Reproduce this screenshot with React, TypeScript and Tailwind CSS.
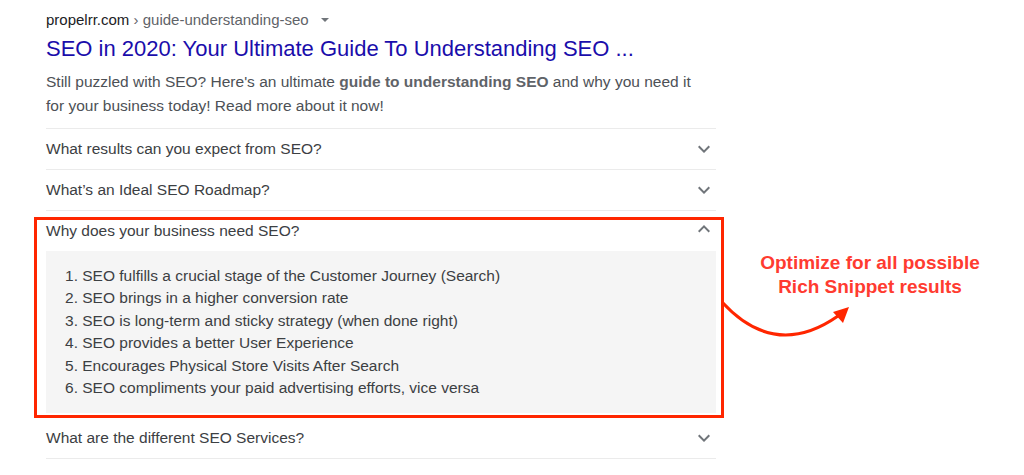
import React from "react";

const faqs = [
    "What results can you expect from SEO?",
    "What’s an Ideal SEO Roadmap?",
];

const reasons = [
    "SEO fulfills a crucial stage of the Customer Journey (Search)",
    "SEO brings in a higher conversion rate",
    "SEO is long-term and sticky strategy (when done right)",
    "SEO provides a better User Experience",
    "Encourages Physical Store Visits After Search",
    "SEO compliments your paid advertising efforts, vice versa",
];

function ChevronDown() {
    return (
        <svg viewBox="0 0 24 24" className="h-6 w-6 shrink-0 fill-[#70757a]">
            <path d="M16.59 8.59L12 13.17 7.41 8.59 6 10l6 6 6-6z" />
        </svg>
    );
}

function ChevronUp() {
    return (
        <svg viewBox="0 0 24 24" className="h-6 w-6 shrink-0 fill-[#70757a]">
            <path d="M12 8l-6 6 1.41 1.41L12 10.83l4.59 4.58L18 14z" />
        </svg>
    );
}

function FaqRow({ q }: { q: string }) {
    return (
        <div className="flex h-[41px] items-center justify-between border-b border-[#ebebeb] pb-px">
            <span className="text-[15.5px] leading-[22px] text-[#3c4043]">{q}</span>
            <ChevronDown />
        </div>
    );
}

export default function App() {
    return (
        <div className="flex h-[475px] w-[1024px] overflow-hidden bg-white font-['Liberation_Sans',Arial,sans-serif]">
            {/* Search result */}
            <div className="ml-[46px] w-[670px] shrink-0">
                <div className="flex items-center pt-[9px] text-[15px] leading-[22px]">
                    <span className="text-[#202124]">propelrr.com</span>
                    <span className="text-[#5f6368]">&nbsp;› guide-understanding-seo</span>
                    <svg viewBox="0 0 10 5" className="ml-[12px] h-[4px] w-[8px] fill-[#70757a]">
                        <path d="M0 0l5 5 5-5z" />
                    </svg>
                </div>
                <p className="mt-[4px] text-[22px] leading-[28px] text-[#1a0dab]">
                    SEO in 2020: Your Ultimate Guide To Understanding SEO ...
                </p>
                <p className="mt-[7px] mb-[10px] text-[15.5px] leading-[24px] text-[#4d5156]">
                    Still puzzled with SEO? Here's an ultimate <b className="text-[#5f6368]">guide to understanding SEO</b> and why you need it
                    <br />
                    for your business today! Read more about it now!
                </p>

                <div className="border-t border-[#ebebeb]">
                    {faqs.map((q) => (
                        <FaqRow key={q} q={q} />
                    ))}

                    {/* Expanded, highlighted */}
                    <div className="mt-[6px] -ml-[12px] -mr-[8px] border-[3px] border-[#ff2600] pb-[2px] pl-[9px] pr-[5px]">
                        <div className="flex h-[31px] items-start justify-between">
                            <span className="text-[15.5px] leading-[22px] text-[#3c4043]">Why does your business need SEO?</span>
                            <div className="-mt-[3px]">
                                <ChevronUp />
                            </div>
                        </div>
                        <ol className="bg-[#f5f5f5] py-[14px] pl-[19px] text-[15.5px] leading-[22.4px] text-[#3c4043]">
                            {reasons.map((r, i) => (
                                <li key={r}>
                                    {i + 1}. {r}
                                </li>
                            ))}
                        </ol>
                    </div>

                    <FaqRow q="What are the different SEO Services?" />
                </div>
            </div>

            {/* Annotation */}
            <div className="relative flex-1">
                <p className="pt-[251px] text-center text-[19px] font-bold leading-[24px] text-[#ff3b30]">
                    Optimize for all possible
                    <br />
                    Rich Snippet results
                </p>
                <svg viewBox="716 0 308 475" className="absolute left-0 top-0 h-[475px] w-[308px]">
                    <path d="M722 302 Q775 360 838 316" fill="none" stroke="#ff2600" strokeWidth="3" />
                    <path d="M849 307 L833 312 L843 323 Z" fill="#ff2600" />
                </svg>
            </div>
        </div>
    );
}
